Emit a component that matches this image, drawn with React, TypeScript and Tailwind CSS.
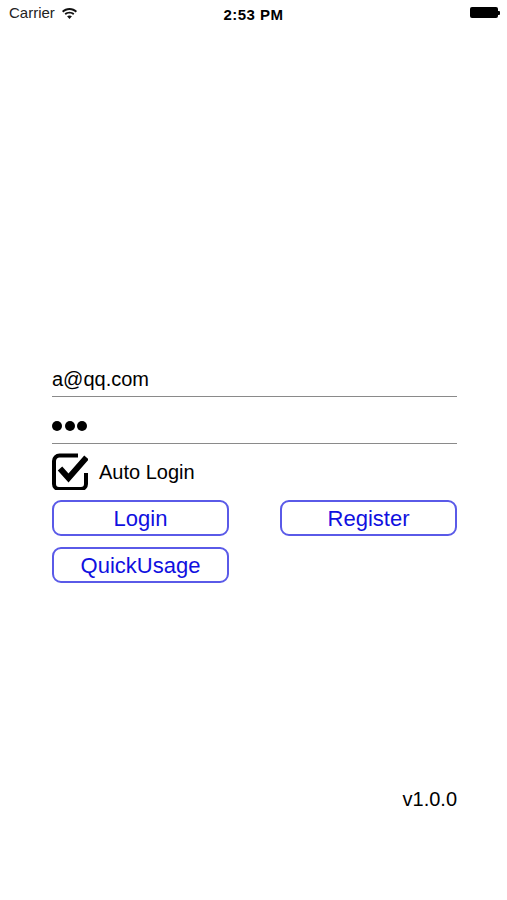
import React, { useState } from 'react';

const font = { fontFamily: '"Liberation Sans", Arial, sans-serif' };

const WifiIcon = () => (
  <svg width="15" height="11" viewBox="0 0 15 11">
    <path d="M7.5 0C4.6 0 2 1.1 0 3l1.3 1.4C3 2.8 5.1 1.9 7.5 1.9s4.5.9 6.2 2.5L15 3C13 1.1 10.4 0 7.5 0z" fill="#111" />
    <path d="M7.5 3.7c-1.9 0-3.6.7-4.9 1.9l1.3 1.4c1-.9 2.2-1.4 3.6-1.4s2.6.5 3.6 1.4l1.3-1.4c-1.3-1.2-3-1.9-4.9-1.9z" fill="#111" />
    <path d="M7.5 7.4c-.9 0-1.8.4-2.4.9L7.5 11l2.4-2.7c-.6-.5-1.5-.9-2.4-.9z" fill="#111" />
  </svg>
);

const CheckIcon = ({ checked }: { checked: boolean }) => (
  <svg width="36" height="37" viewBox="0 0 36 37">
    <path d="M26 2.5H7.5A5.5 5.5 0 0 0 2 8v23a5 5 0 0 0 5 5h22a5 5 0 0 0 5-5V20" fill="none" stroke="#000" strokeWidth="4" />
    {checked && <path d="M8 15.5l8.5 9.5L34.5 4.5" fill="none" stroke="#000" strokeWidth="6" />}
  </svg>
);

const OutlineButton = ({ label }: { label: string }) => (
  <button className="w-[177px] h-[36px] rounded-[9px] border-2 border-[#5a5ae8] bg-white text-[22px] leading-[25px] text-[#1010e0]">
    {label}
  </button>
);

export default function App() {
  const [autoLogin, setAutoLogin] = useState(true);

  return (
    <div className="w-[507px] min-h-[900px] bg-white flex flex-col text-black" style={font}>
      {/* status bar */}
      <div className="h-[27px] flex items-center justify-between relative pl-[9px] pr-[7px]">
        <div className="flex items-center gap-[7px] text-[15px] text-[#222]">
          <span>Carrier</span>
          <WifiIcon />
        </div>
        <div className="absolute left-0 right-0 top-[4px] text-center text-[15px] font-bold tracking-[0.5px]">2:53 PM</div>
        <div className="flex items-center -mt-[2px]">
          <div className="w-[28px] h-[11px] rounded-[2px] bg-black" />
          <div className="w-[2px] h-[4px] bg-black rounded-r-[1px]" />
        </div>
      </div>

      <div className="pl-[52px] pr-[50px] pt-[333px] flex flex-col">
        <div className="h-[37px] flex items-end pb-[5px] border-b border-[#8a8a8a] text-[20px] leading-[23px]">
          a@qq.com
        </div>
        <div className="h-[47px] flex items-end gap-[2.5px] pb-[12px] border-b border-[#8a8a8a]">
          <span className="w-[10px] h-[10px] rounded-full bg-black" />
          <span className="w-[10px] h-[10px] rounded-full bg-black" />
          <span className="w-[10px] h-[10px] rounded-full bg-black" />
        </div>

        <div className="mt-[9px] h-[37px] flex items-center gap-[11px]">
          <button onClick={() => setAutoLogin(!autoLogin)} className="w-[36px] h-[37px]">
            <CheckIcon checked={autoLogin} />
          </button>
          <span className="text-[20px] leading-[23px] pt-[2px]">Auto Login</span>
        </div>

        <div className="mt-[10px] flex justify-between">
          <OutlineButton label="Login" />
          <OutlineButton label="Register" />
        </div>
        <div className="mt-[11px] flex">
          <OutlineButton label="QuickUsage" />
        </div>
      </div>

      <div className="mt-auto pr-[50px] pb-[89px] text-right text-[20px] leading-[23px]">v1.0.0</div>
    </div>
  );
}
